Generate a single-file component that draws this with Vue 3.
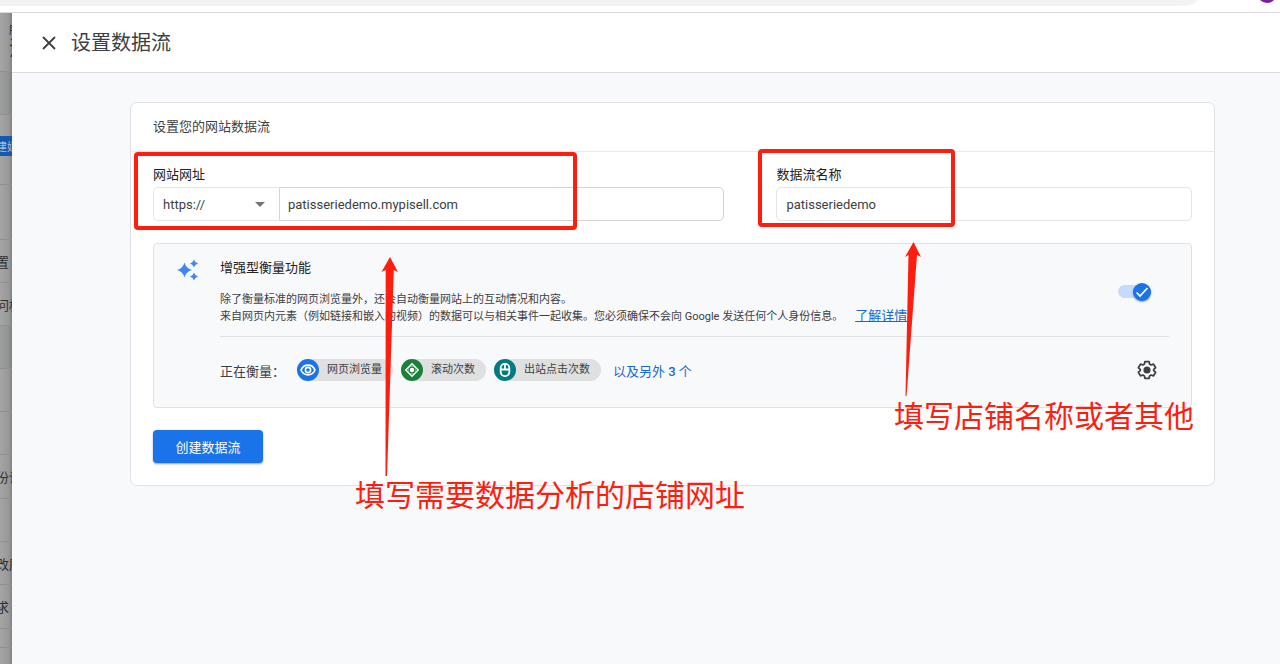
<script setup>
import { ref } from 'vue'

const protocol = ref('https://')
const site = ref('patisseriedemo.mypisell.com')
const streamName = ref('patisseriedemo')
const enhanced = ref(true)

const navRows = [
  { h: 59, text: '', cls: 'head' },
  { h: 43, text: '', cls: 'shade' },
  { h: 21, text: '', cls: 'plain' },
  { h: 20, text: '建媒', cls: 'active' },
  { h: 29, text: '', cls: '' },
  { h: 55, text: '', cls: '' },
  { h: 43, text: '置', cls: '' },
  { h: 43, text: '问权', cls: '' },
  { h: 43, text: '', cls: 'shade' },
  { h: 43, text: '', cls: '' },
  { h: 43, text: '', cls: '' },
  { h: 44, text: '份访', cls: '' },
  { h: 43, text: '', cls: '' },
  { h: 43, text: '改历', cls: '' },
  { h: 44, text: '求', cls: '' },
  { h: 19, text: '', cls: '' },
  { h: 16, text: '', cls: 'plain' },
]

const chips = [
  { icon: 'eye', text: '网页浏览量' },
  { icon: 'scroll', text: '滚动次数' },
  { icon: 'mouse', text: '出站点击次数' },
]
</script>

<template>
  <div class="window">
    <div class="chrome">
      <div class="omnibox"></div>
      <div class="avatar"></div>
    </div>

    <div class="body">
      <nav class="dimmed">
        <div
          v-for="(row, i) in navRows"
          :key="i"
          class="nav-row"
          :class="row.cls"
          :style="{ height: row.h + 'px' }"
        >
          <template v-if="row.cls === 'head'">
            <small>所</small>
            <b>流</b>
          </template>
          <template v-else>{{ row.text }}</template>
        </div>
      </nav>

      <main class="panel">
        <header class="panel-head">
          <button class="close" aria-label="关闭">
            <svg viewBox="0 0 14 14" width="14" height="14">
              <path d="M1 1 13 13M13 1 1 13" stroke="#3c4043" stroke-width="1.8" fill="none" />
            </svg>
          </button>
          <h1>设置数据流</h1>
        </header>

        <div class="content">
          <section class="card">
            <h2>设置您的网站数据流</h2>
            <div class="card-body">
              <div class="fields">
                <div class="field">
                  <label for="site">网站网址</label>
                  <div class="url">
                    <div class="select-wrap">
                      <select v-model="protocol" aria-label="协议">
                        <option>https://</option>
                        <option>http://</option>
                      </select>
                      <svg class="caret" viewBox="0 0 10 5" width="10" height="5">
                        <path d="M0 0h10L5 5z" fill="#757575" />
                      </svg>
                    </div>
                    <input id="site" v-model="site" type="text" class="site" />
                  </div>
                </div>
                <div class="field">
                  <label for="stream">数据流名称</label>
                  <input id="stream" v-model="streamName" type="text" class="stream" />
                </div>
              </div>

              <div class="enhanced">
                <svg class="sparkle" viewBox="0 0 22 22" width="22" height="22">
                  <g fill="#4285f4">
                    <path d="M7.500 3.500 Q9 9.500 15 11 Q9 12.500 7.500 18.500 Q6 12.500 0 11 Q6 9.500 7.500 3.500z" />
                    <path d="M17 .5 Q17.800 3.700 21 4.500 Q17.800 5.300 17 8.500 Q16.200 5.300 13 4.500 Q16.200 3.700 17 .5z" />
                    <path d="M17 13.500 Q17.800 16.700 21 17.500 Q17.800 18.300 17 21.500 Q16.200 18.300 13 17.500 Q16.200 16.700 17 13.500z" />
                  </g>
                </svg>
                <div class="enhanced-main">
                  <div class="top">
                    <div class="copy">
                      <h3>增强型衡量功能</h3>
                      <p>除了衡量标准的网页浏览量外，还会自动衡量网站上的互动情况和内容。</p>
                      <p>
                        来自网页内元素（例如链接和嵌入的视频）的数据可以与相关事件一起收集。您必须确保不会向 Google 发送任何个人身份信息。<a href="#">了解详情</a>
                      </p>
                    </div>
                    <label class="toggle">
                      <input v-model="enhanced" type="checkbox" aria-label="增强型衡量功能" />
                      <span class="track"></span>
                      <span class="thumb">
                        <svg viewBox="0 0 18 18" width="18" height="18">
                          <path d="M3.500 9.500 7 13 14.500 5" stroke="#fff" stroke-width="1.7" fill="none" />
                        </svg>
                      </span>
                    </label>
                  </div>
                  <div class="measuring">
                    <span class="measuring-label">正在衡量：</span>
                    <div class="chips">
                      <span v-for="c in chips" :key="c.icon" class="chip">
                        <span class="dot" :class="c.icon">
                          <svg v-if="c.icon === 'eye'" viewBox="0 0 22 22" width="22" height="22" fill="none" stroke="#fff">
                            <path d="M4 11C5.500 7.700 8 6.200 11 6.200S16.500 7.700 18 11C16.500 14.300 14 15.800 11 15.800S5.500 14.300 4 11z" stroke-width="1.7" />
                            <circle cx="11" cy="11" r="2.600" stroke-width="1.600" />
                          </svg>
                          <svg v-else-if="c.icon === 'scroll'" viewBox="0 0 22 22" width="22" height="22">
                            <path d="M11 3.800 18.200 11 11 18.200 3.800 11z" fill="#fff" />
                            <path d="M8.800 7.800 11 5.900 13.200 7.800 11 7.200zM8.800 14.200 11 16.100 13.200 14.200 11 14.800zM7.800 8.800 5.900 11 7.800 13.200 7.200 11zM14.200 8.800 16.100 11 14.200 13.200 14.800 11z" fill="#188038" />
                            <circle cx="11" cy="11" r="2.900" fill="none" stroke="#188038" stroke-width="1.300" />
                          </svg>
                          <svg v-else viewBox="0 0 22 22" width="22" height="22" fill="none" stroke="#fff" stroke-width="1.8">
                            <rect x="6.700" y="4.900" width="8.600" height="12.200" rx="4" />
                            <path d="M6.700 10.500h8.600M11 4.900v5.600" />
                          </svg>
                        </span>
                        {{ c.text }}
                      </span>
                    </div>
                    <button class="more">以及另外 <b>3</b> 个</button>
                    <button class="gear" aria-label="设置">
                      <svg viewBox="0 0 24 24" width="22" height="22">
                        <path
                          d="M9.700 2.800h4.600l.5 2.700 1.700 1 2.600-.9 2.300 4-2.100 1.800v1.200l2.100 1.800-2.300 4-2.600-.9-1.700 1-.5 2.700H9.700l-.5-2.700-1.700-1-2.600.9-2.300-4 2.100-1.800v-1.200L2.600 9.600l2.300-4 2.600.9 1.700-1z"
                          fill="none"
                          stroke="#3c4043"
                          stroke-width="1.900"
                          stroke-linejoin="round"
                        />
                        <circle cx="12" cy="12" r="3.900" fill="#3c4043" />
                      </svg>
                    </button>
                  </div>
                </div>
              </div>

              <button class="create">创建数据流</button>
            </div>
          </section>
        </div>
      </main>
    </div>

    <div class="mark mark-url"></div>
    <div class="mark mark-name"></div>
    <svg class="arrows" viewBox="0 0 1280 664" width="1280" height="664" fill="#ff1d0f">
      <path d="M390 257 398 272 393.800 270 387 476H385.500L385.700 270 381.500 272z" />
      <path d="M913.500 242 921 257 917 255 906.500 396H905.500L908.500 255 905 257z" />
    </svg>
    <div class="note note-url">填写需要数据分析的店铺网址</div>
    <div class="note note-name">填写店铺名称或者其他</div>
  </div>
</template>

<style>
body {
  overflow: hidden;
}
</style>

<style scoped>
* {
  box-sizing: border-box;
}
.window {
  position: relative;
  display: flex;
  flex-direction: column;
  height: 100vh;
  overflow: hidden;
  background: #fff;
  color: #3c4043;
  font-family: Roboto, "Noto Sans CJK SC", sans-serif;
  font-size: 13px;
}
button,
input,
select {
  font: inherit;
  color: inherit;
}
button {
  border: 0;
  padding: 0;
  background: none;
}
h1,
h2,
h3,
p {
  margin: 0;
  font-weight: 400;
}
.chrome {
  flex: none;
  display: flex;
  justify-content: space-between;
  height: 13px;
  padding-right: 3px;
  border-bottom: 1px solid #d8dadc;
}
.omnibox {
  flex: 1;
  height: 6px;
  margin-right: 60px;
  background: #f1f3f4;
  border-bottom-right-radius: 16px 6px;
}
.avatar {
  width: 20px;
  height: 20px;
  margin-top: -17px;
  border-radius: 50%;
  background: #7b1fa2;
}
.body {
  flex: 1;
  display: flex;
  min-height: 0;
}
.dimmed {
  flex: none;
  width: 12px;
  overflow: hidden;
  background: linear-gradient(90deg, #a5a5a5, #999 70%, #828282);
  color: #2d2f31;
}
.nav-row {
  display: flex;
  align-items: center;
  overflow: hidden;
  border-bottom: 1px solid #8f9091;
  white-space: nowrap;
  text-indent: -4px;
  font-size: 13px;
}
.nav-row.shade {
  background: rgba(90, 96, 100, 0.1);
}
.nav-row.plain {
  border-bottom: 0;
}
.nav-row.active {
  border-bottom: 0;
  background: #1558b0;
  color: #b4bcc8;
  font-size: 11px;
}
.nav-row.head {
  flex-direction: column;
  align-items: flex-start;
  justify-content: center;
  text-indent: 9px;
}
.head small {
  font-size: 11px;
  line-height: 14px;
}
.head b {
  font-size: 20px;
  line-height: 22px;
  font-weight: 400;
}
.panel {
  flex: 1;
  min-width: 0;
  background: #f8f9fb;
}
.panel-head {
  display: flex;
  align-items: center;
  gap: 15px;
  height: 60px;
  padding-left: 30px;
  background: #fff;
  border-bottom: 1px solid #dadce0;
}
.close {
  display: flex;
}
h1 {
  font-size: 20px;
  line-height: 30px;
}
.content {
  padding: 29px 65px 0 118px;
}
.card {
  background: #fff;
  border: 1px solid #dfe1e6;
  border-radius: 7px;
}
h2 {
  height: 49px;
  padding-left: 22px;
  border-bottom: 1px solid #e8eaed;
  font-size: 13px;
  line-height: 48px;
}
.card-body {
  padding: 13px 22px 22px;
}
.fields {
  display: grid;
  grid-template-columns: 572fr 416fr;
  gap: 52px;
}
.field label {
  display: block;
  margin-bottom: 2px;
  line-height: 20px;
  color: #202124;
}
.url {
  display: flex;
}
.select-wrap {
  display: flex;
  align-items: center;
  width: 126px;
}
select,
input[type="text"] {
  width: 100%;
  height: 34px;
  padding: 1px 9px 0;
  border: 1px solid #e4e6e9;
  border-radius: 5px;
  background: #fff;
  outline: 0;
}
select {
  appearance: none;
  border-right: 0;
  border-radius: 5px 0 0 5px;
}
.caret {
  flex: none;
  margin-left: -24px;
  margin-right: 14px;
  pointer-events: none;
}
input.site {
  flex: 1;
  width: 0;
  border-color: #d2d4d7;
  border-radius: 0 5px 5px 0;
  padding-left: 8px;
}
.enhanced {
  display: flex;
  margin-top: 22px;
  padding: 14px 22px 14px 23px;
  background: #f8f9fb;
  border: 1px solid #dfe1e5;
  border-radius: 4px;
}
.sparkle {
  flex: none;
  margin-top: 1px;
  margin-right: 21px;
}
.enhanced-main {
  flex: 1;
  min-width: 0;
}
.top {
  display: flex;
  justify-content: space-between;
  align-items: center;
  padding-bottom: 11px;
  border-bottom: 1px solid #dfe1e5;
}
h3 {
  margin-bottom: 13px;
  color: #202124;
  font-size: 13px;
  line-height: 20px;
}
p {
  font-size: 11px;
  line-height: 17px;
  white-space: nowrap;
}
p a {
  margin-left: 12px;
  color: #1967d2;
  font-size: 13px;
  line-height: 16px;
}
.toggle {
  display: flex;
  align-items: center;
  margin-right: 18px;
}
.toggle input {
  appearance: none;
  width: 0;
  height: 0;
  margin: 0;
}
.track {
  width: 28px;
  height: 13px;
  border-radius: 7px;
  background: #c6dafc;
}
.thumb {
  display: flex;
  width: 18px;
  height: 18px;
  margin-left: -13px;
  border-radius: 50%;
  background: #1a73e8;
  box-shadow: 0 1px 2px rgba(0, 0, 0, 0.4);
}
.measuring {
  display: flex;
  align-items: center;
  padding-top: 10px;
  height: 56px;
}
.measuring-label {
  width: 77px;
}
.chips {
  display: flex;
  gap: 8px;
}
.chip {
  display: flex;
  align-items: center;
  gap: 8px;
  padding-right: 11px;
  border-radius: 11px;
  background: #e0e0e0;
  font-size: 11px;
  line-height: 22px;
  white-space: nowrap;
}
.dot {
  display: flex;
  border-radius: 50%;
}
.eye {
  background: #1a73e8;
}
.scroll {
  background: #188038;
}
.mouse {
  background: #007b83;
}
.more {
  margin-left: 12px;
  color: #1967d2;
}
.more b {
  font-weight: 500;
}
.gear {
  display: flex;
  margin-left: auto;
  margin-right: 11px;
}
.create {
  display: block;
  width: 110px;
  height: 33px;
  margin-top: 22px;
  border-radius: 4px;
  background: #1a73e8;
  color: #fff;
  box-shadow: 0 1px 2px rgba(60, 64, 67, 0.5);
}
.mark {
  position: absolute;
  border: 4px solid #ff1d0f;
  border-radius: 4px;
}
.mark-url {
  left: 134px;
  top: 152px;
  width: 443px;
  height: 78px;
}
.mark-name {
  left: 758px;
  top: 149px;
  width: 197px;
  height: 78px;
}
.arrows {
  position: absolute;
  left: 0;
  top: 0;
  pointer-events: none;
}
.note {
  position: absolute;
  color: #ff1d0f;
  font-size: 30px;
  line-height: 40px;
  white-space: nowrap;
}
.note-url {
  left: 355px;
  top: 476px;
}
.note-name {
  left: 894px;
  top: 397px;
}
</style>
